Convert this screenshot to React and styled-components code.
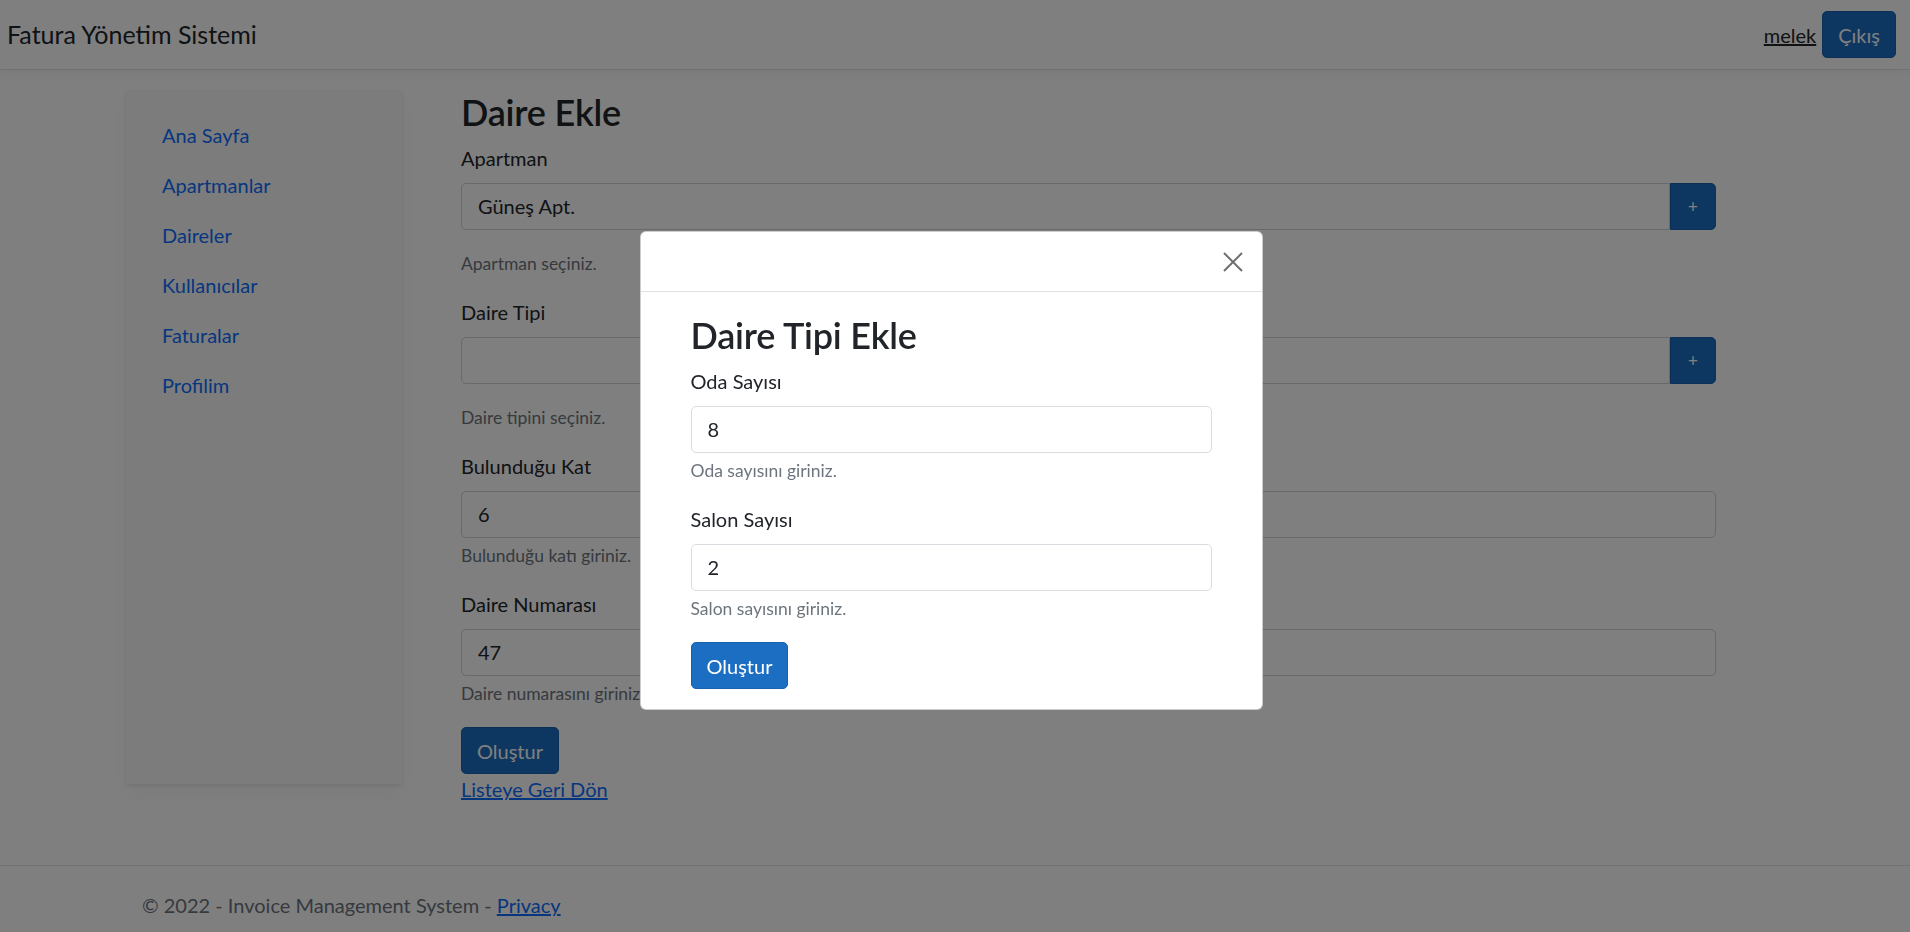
import React from "react";
import styled, { createGlobalStyle } from "styled-components";

const GlobalStyle = createGlobalStyle`
  html, body {
    margin: 0;
    padding: 0;
  }
  body {
    font-family: Lato, "Liberation Sans", sans-serif;
    font-size: 20px;
    line-height: 1.5;
    color: #212529;
    background: #fff;
  }
  * {
    box-sizing: border-box;
  }
`;

const links = ["Ana Sayfa", "Apartmanlar", "Daireler", "Kullanıcılar", "Faturalar", "Profilim"];

export default function App() {
  return (
    <>
      <GlobalStyle />
      <Page>
        <Navbar>
          <Brand>Fatura Yönetim Sistemi</Brand>
          <NavRight>
            <UserLink href="#">melek</UserLink>
            <Button>Çıkış</Button>
          </NavRight>
        </Navbar>

        <Main>
          <Sidebar>
            {links.map(l => (
              <SideLink key={l} href="#">
                {l}
              </SideLink>
            ))}
          </Sidebar>

          <Content>
            <Title>Daire Ekle</Title>

            <FormGroup>
              <Label>Apartman</Label>
              <InputGroup>
                <Field>Güneş Apt.</Field>
                <AddButton>+</AddButton>
              </InputGroup>
              <Hint spaced>Apartman seçiniz.</Hint>
            </FormGroup>

            <FormGroup>
              <Label>Daire Tipi</Label>
              <InputGroup>
                <Field />
                <AddButton>+</AddButton>
              </InputGroup>
              <Hint spaced>Daire tipini seçiniz.</Hint>
            </FormGroup>

            <FormGroup>
              <Label>Bulunduğu Kat</Label>
              <Field>6</Field>
              <Hint>Bulunduğu katı giriniz.</Hint>
            </FormGroup>

            <FormGroup>
              <Label>Daire Numarası</Label>
              <Field>47</Field>
              <Hint>Daire numarasını giriniz.</Hint>
            </FormGroup>

            <Button>Oluştur</Button>
            <BackLink href="#">Listeye Geri Dön</BackLink>
          </Content>
        </Main>

        <Footer>
          © 2022 - Invoice Management System - <FooterLink href="#">Privacy</FooterLink>
        </Footer>
      </Page>

      <Backdrop />
      <ModalWrap>
        <Dialog>
          <ModalHeader>
            <CloseButton aria-label="Close">
              <svg width="22" height="22" viewBox="0 0 22 22">
                <path d="M2 2L20 20M20 2L2 20" stroke="#6f6f6f" strokeWidth="2" fill="none" />
              </svg>
            </CloseButton>
          </ModalHeader>
          <ModalBody>
            <Title>Daire Tipi Ekle</Title>
            <FormGroup>
              <Label>Oda Sayısı</Label>
              <Field light>8</Field>
              <Hint>Oda sayısını giriniz.</Hint>
            </FormGroup>
            <FormGroup>
              <Label>Salon Sayısı</Label>
              <Field light>2</Field>
              <Hint>Salon sayısını giriniz.</Hint>
            </FormGroup>
            <Button>Oluştur</Button>
          </ModalBody>
        </Dialog>
      </ModalWrap>
    </>
  );
}

const Page = styled.div`
  min-height: 100vh;
  display: flex;
  flex-direction: column;
`;

const Navbar = styled.nav`
  height: 70px;
  display: flex;
  align-items: center;
  justify-content: space-between;
  padding: 0 14px 0 7px;
  background: #fff;
  border-bottom: 1px solid #dee2e6;
  box-shadow: 0 4px 12px rgba(0, 0, 0, 0.05);
`;

const Brand = styled.div`
  font-size: 25px;
  line-height: 1.5;
  color: #212529;
`;

const NavRight = styled.div`
  display: flex;
  align-items: center;
  gap: 6px;
`;

const UserLink = styled.a`
  color: #212529;
  text-decoration: underline;
`;

const Button = styled.button`
  font-family: inherit;
  font-size: 20px;
  line-height: 30px;
  padding: 7.5px 15px;
  color: #fff;
  background: #1b6ec2;
  border: 1px solid #1861ac;
  border-radius: 5px;
  display: inline-block;
  cursor: pointer;
`;

const Main = styled.main`
  flex: 1;
  display: flex;
  align-items: flex-start;
  padding: 18px 0 0 126px;
`;

const Sidebar = styled.div`
  width: 276px;
  height: 694px;
  margin-top: 2px;
  padding: 20px 16px;
  background: #f8f9fa;
  box-shadow: 0 2px 4px rgba(0, 0, 0, 0.075), 0 8px 20px rgba(0, 0, 0, 0.04);
`;

const SideLink = styled.a`
  display: block;
  padding: 10px 20px;
  line-height: 30px;
  color: #0d6efd;
  text-decoration: none;
`;

const Content = styled.div`
  margin-left: 59px;
  width: 1255px;
`;

const Title = styled.h2`
  margin: 0 0 7px;
  font-size: 36px;
  font-weight: 600;
  line-height: 48px;
  letter-spacing: -0.2px;
`;

const FormGroup = styled.div`
  margin-bottom: 20px;
`;

const Label = styled.label`
  display: block;
  line-height: 30px;
  margin-bottom: 10px;
`;

const InputGroup = styled.div`
  display: flex;
`;

const Field = styled.div`
  flex: 1;
  height: 47px;
  line-height: 45px;
  padding: 0 16px;
  border: 1px solid ${p => (p.light ? "#d9dde1" : "#ced4da")};
  border-radius: 5px;
  background: #fff;
  color: #212529;
  ${InputGroup} & {
    border-radius: 5px 0 0 5px;
  }
`;

const AddButton = styled.button`
  width: 46px;
  height: 47px;
  padding: 0;
  font-family: inherit;
  font-size: 17px;
  color: #fff;
  background: #1b6ec2;
  border: 1px solid #1861ac;
  border-radius: 0 5px 5px 0;
`;

const Hint = styled.div`
  margin-top: ${p => (p.spaced ? "21px" : "5px")};
  font-size: 17.5px;
  line-height: 26px;
  color: #6c757d;
`;

const BackLink = styled.a`
  display: block;
  width: fit-content;
  line-height: 30px;
  color: #0d6efd;
  text-decoration: underline;
`;

const Footer = styled.footer`
  height: 67px;
  padding: 24px 0 0 142px;
  border-top: 1px solid #dee2e6;
  line-height: 30px;
  color: #6c757d;
  white-space: nowrap;
`;

const FooterLink = styled.a`
  color: #0d6efd;
  text-decoration: underline;
`;

const Backdrop = styled.div`
  position: fixed;
  inset: 0;
  background: rgba(0, 0, 0, 0.5);
`;

const ModalWrap = styled.div`
  position: fixed;
  inset: 0;
  display: flex;
  justify-content: center;
  align-items: flex-start;
  padding: 231px 8px 0 0;
`;

const Dialog = styled.div`
  width: 623px;
  background: #fff;
  border: 1px solid rgba(0, 0, 0, 0.2);
  border-radius: 6px;
  overflow: hidden;
`;

const ModalHeader = styled.div`
  height: 60px;
  display: flex;
  align-items: center;
  justify-content: flex-end;
  padding-right: 14px;
  border-bottom: 1px solid #dee2e6;
`;

const CloseButton = styled.button`
  width: 30px;
  height: 30px;
  padding: 0;
  display: flex;
  align-items: center;
  justify-content: center;
  background: transparent;
  border: 0;
  cursor: pointer;
`;

const ModalBody = styled.div`
  padding: 19px 50px 20px;
`;
